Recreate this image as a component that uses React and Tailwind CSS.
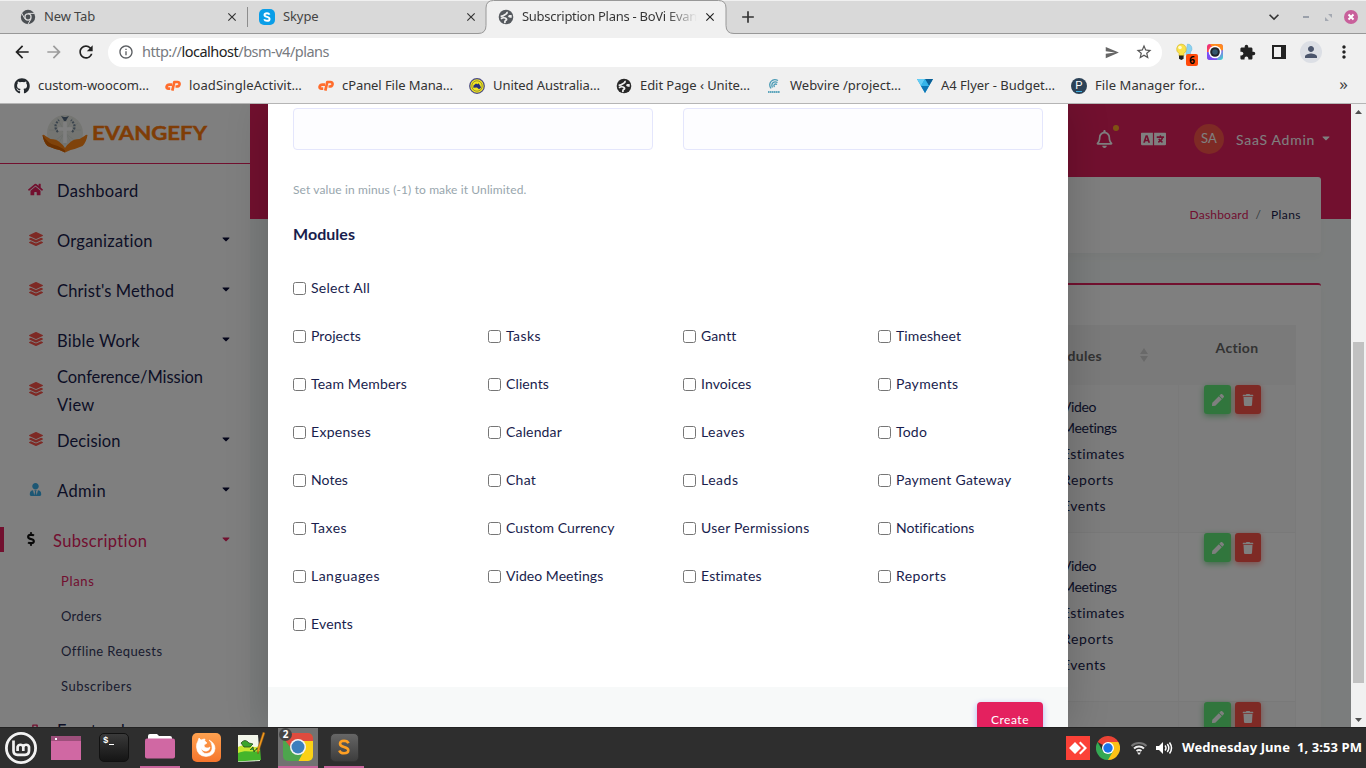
import React, { useLayoutEffect, useRef } from "react";
import { FaHome, FaLayerGroup, FaUserTie, FaDollarSign, FaLanguage, FaRegBell, FaPen, FaTrash, FaGithub, FaCaretDown, FaNetworkWired } from "react-icons/fa";
import { MdArrowBack, MdArrowForward, MdRefresh, MdInfoOutline, MdSend, MdStarBorder, MdExtension, MdPerson, MdMoreVert, MdExpandMore, MdClose, MdAdd } from "react-icons/md";

// Text set to an exact advance width by spreading the remainder over its letters.
function Fit({ w, className = "", children }) {
  const ref = useRef(null);
  useLayoutEffect(() => {
    const el = ref.current;
    el.style.letterSpacing = "0px";
    const natural = el.getBoundingClientRect().width;
    el.style.letterSpacing = (w - natural) / el.textContent.length + "px";
  }, [w]);
  return <span ref={ref} className={"inline-block shrink-0 whitespace-nowrap " + className}>{children}</span>;
}

function Globe({ className }) {
  return (
    <svg viewBox="0 0 16 16" className={className}>
      <circle cx="8" cy="8" r="7.3" fill="currentColor" />
      <path d="M8.800 2.800C9.800 4.600 8 4.900 7 5.600 6 6.600 5 7.300 2.600 7.300" fill="none" stroke="#efefef" strokeWidth="1.700" />
      <path d="M3 9.800c1.500-1.300 4-1.300 5.200-.2 1.300 1.200-.8 1.600-1.200 2.600-.3.900-.1 1.300 0 2" fill="none" stroke="#efefef" strokeWidth="1.700" />
      <path d="M13.900 6.400c-1.600-.9-3.700-.3-3.800.9 0 1.300 2.100 1.500 3.400 1.700z" fill="#efefef" />
    </svg>
  );
}

function ChromeLogo({ className }) {
  return (
    <svg viewBox="0 0 24 24" className={className}>
      <path d="M12 12 1.6 6A12 12 0 0 1 22.4 6z" fill="#ea4335" />
      <path d="M12 12V6h10.4A12 12 0 0 1 12 24z" fill="#fbc116" />
      <path d="M12 12l5.2 3L12 24A12 12 0 0 1 1.6 6l5.2 9z" fill="#34a853" />
      <circle cx="12" cy="12" r="6" fill="#fff" />
      <circle cx="12" cy="12" r="4.7" fill="#1a73e8" />
    </svg>
  );
}

function TabStrip() {
  return (
    <div className="flex h-[34px] shrink-0 items-stretch border-b border-[#989898] border-t border-t-[#f0f0f0] bg-[#d9d9d9] text-[13px] text-[#444]">
      <div className="flex w-[247px] items-center pl-5">
        <svg viewBox="0 0 16 16" className="size-4 shrink-0">
          <circle cx="8" cy="8" r="7.2" fill="#4b4f53" />
          <circle cx="8" cy="8" r="3.7" fill="#d9d9d9" />
          <circle cx="8" cy="8" r="2.4" fill="#4b4f53" />
          <path d="M8 4.4h6.6M4.9 9.8 1.6 4M11 9.9 7.8 15.5" stroke="#d9d9d9" strokeWidth="1" />
        </svg>
        <Fit w={51} className="ml-2">New Tab</Fit>
        <MdClose className="ml-[130px] size-[14px] stroke-[#333] text-[#333]" />
      </div>
      <div className="my-1.5 w-px bg-[#8d8d8d]" />
      <div className="flex w-[238px] items-center pl-[11px]">
        <span className="flex size-4 items-center justify-center rounded-[5px] bg-[#0a9ee8]">
          <svg viewBox="0 0 16 16" className="size-4"><path d="M10.600 5.600C10 4.500 9.200 4.200 8 4.200c-1.400 0-2.500.7-2.500 1.800 0 2.500 5.100 1.300 5.100 3.900 0 1.200-1.200 1.900-2.600 1.900s-2.400-.5-2.800-1.600" fill="none" stroke="#fff" strokeWidth="1.900" /></svg>
        </span>
        <Fit w={35.5} className="ml-2">Skype</Fit>
        <MdClose className="ml-[145px] size-[14px] stroke-[#333] text-[#333]" />
      </div>
      <div className="relative flex w-[240px] items-center pl-3">
        <svg viewBox="0 0 256 34" className="absolute -left-2 -top-px h-[34px] w-[256px]">
          <path d="M0 33.500q8 0 8-8V8q0-7.500 7.500-7.500h225Q248 .5 248 8v17.500q0 8 8 8V35H0z" fill="#f0f0f0" />
          <path d="M0 33.500q8 0 8-8V8q0-7.500 7.500-7.500h225Q248 .5 248 8v17.500q0 8 8 8" fill="none" stroke="#989898" />
        </svg>
        <Globe className="relative size-4 shrink-0 text-[#55595e]" />
        <Fit w={175} className="relative ml-2 bg-linear-to-r from-[#333] from-82% to-[#f0f0f0] to-100% bg-clip-text text-transparent">Subscription Plans - BoVi Evan</Fit>
        <MdClose className="relative ml-1.5 size-[14px] shrink-0 stroke-[#222] text-[#222]" />
      </div>
      <div className="flex flex-1 items-center pl-3">
        <MdAdd className="size-[20px] text-[#333]" />
        <MdExpandMore className="ml-[506px] size-[20px] text-[#333]" />
        <div className="ml-[19px] h-[2px] w-[6px] bg-[#9aa0aa]" />
        <svg viewBox="0 0 8 8" className="ml-[16px] size-[7px]"><path d="M3.500 0H8v4.500zM0 3.500V8h4.500z" fill="#a4a9b2" /></svg>
        <svg viewBox="0 0 14 14" className="ml-[12px] size-[14px]"><circle cx="7" cy="7" r="7" fill="#c8609b" /><path d="M4.500 4.500l5 5M9.500 4.500l-5 5" stroke="#fff" strokeWidth="2" /></svg>
      </div>
    </div>
  );
}

function Toolbar() {
  return (
    <div className="flex h-[36px] shrink-0 items-center bg-[#f0f0f0] pl-3 text-[#333]">
      <MdArrowBack className="size-5 text-[#222]" />
      <MdArrowForward className="ml-3 size-5 text-[#9c9c9c]" />
      <MdRefresh className="ml-3 size-5 text-[#222]" />
      <div className="ml-3 flex h-[29px] w-[1054px] items-center rounded-full bg-white pl-2.5 text-[14.5px]">
        <MdInfoOutline className="size-4 text-[#5a5d61]" />
        <Fit w={187} className="ml-2 text-[#777b80]">http://<span className="text-[#222]">localhost</span>/bsm-v4/plans</Fit>
        <MdSend className="ml-auto h-[15px] w-4 text-[#666]" />
        <MdStarBorder className="ml-[15px] mr-[9px] size-[18px] text-[#555]" />
      </div>
      <div className="relative ml-[13px] size-[22px]">
        <svg viewBox="0 0 22 22" className="size-[22px]">
          <path d="M12.500 3a4.600 4.600 0 0 1 3 8V14H11v-3z" fill="#8bd3f2" stroke="#6fb4d6" strokeWidth=".5" />
          <path d="M6 3a5.200 5.200 0 0 1 3 9.500V15H4v-2.500A5.200 5.200 0 0 1 6 3z" fill="#fbe24a" stroke="#c9a820" strokeWidth=".5" />
          <circle cx="5" cy="6.500" r="1.800" fill="#fffbd0" />
          <path d="M4 14.500h4.600v3.200l-2.300 1.300L4 17.700z" fill="#222" />
        </svg>
        <span className="absolute left-[11px] top-[13px] flex h-3 w-3 items-center justify-center rounded-xs bg-[#ff4a0a] text-[10px] font-bold text-black">6</span>
      </div>
      <svg viewBox="0 0 16 16" className="ml-[10px] size-4">
        <defs>
          <linearGradient id="lens" x1="0" y1="0" x2="1" y2="1"><stop offset="0" stopColor="#e91e8c" /><stop offset=".35" stopColor="#ff5a3c" /><stop offset=".6" stopColor="#a05cf0" /><stop offset="1" stopColor="#2fe0c8" /></linearGradient>
        </defs>
        <rect width="16" height="16" rx="3" fill="url(#lens)" />
        <path d="M3 0h10q3 0 3 3v3L8 8z" fill="#ff8a1e" />
        <path d="M0 8l8 0 2 8H3q-3 0-3-3z" fill="#7a4cf5" />
        <circle cx="8" cy="8" r="6.300" fill="#fff" /><circle cx="8" cy="8" r="4.800" fill="#20252b" /><circle cx="8" cy="8" r="2.800" fill="#35586e" />
      </svg>
      <MdExtension className="ml-4 size-[17px] text-[#222]" />
      <div className="ml-4 h-[14px] w-[14px] border-2 border-r-[5px] border-[#222]" />
      <div className="ml-[14px] flex size-[22px] items-center justify-center rounded-full bg-[#dcdfe5]"><MdPerson className="size-[18px] text-[#4b556c]" /></div>
      <MdMoreVert className="ml-3 size-5 text-[#222]" />
    </div>
  );
}

function CpanelMark() {
  return (
    <svg viewBox="0 0 16 16" className="size-4" fill="none" stroke="#ff6c2c" strokeWidth="2.700" strokeLinejoin="round">
      <path d="M7 6.600H4.500q-2.300.1-2.900 2-.3 2 1.900 2.100h1.700" />
      <path d="M7.300 12.600 9.300 4h3q2.500.2 2.200 2.300-.6 2.200-3 2.200h-1" />
    </svg>
  );
}

const bookmarks = [
  ["custom-woocom…", 111, <FaGithub className="size-4 text-[#24292e]" />],
  ["loadSingleActivit…", 113, <CpanelMark />],
  ["cPanel File Mana…", 111, <CpanelMark />],
  ["United Australia…", 107, <svg viewBox="0 0 16 16" className="size-4"><circle cx="8" cy="8" r="7.300" fill="#f2e622" stroke="#4a4a86" strokeWidth="1.200" /><circle cx="8" cy="8" r="5.200" fill="none" stroke="#77752a" strokeWidth=".7" /><path d="M4.300 9.800 4.500 7.500 7 5.500l1.500.7 1-1 1.800 2.500.7 2-2 1.500-2-1.600z" fill="#28317c" /></svg>],
  ["Edit Page ‹ Unite…", 110, <Globe className="size-4 text-[#292929]" />],
  ["Webvire /project…", 111, <svg viewBox="0 0 16 16" className="size-4"><path d="M5 10.500C1.500 5 6.500-.5 12 2.500M6.500 9.500C4.500 5.500 8 2.500 11.500 4.500M8.500 9c-1.500-2 .5-3.800 2.500-2.500" fill="none" stroke="#4a9ab5" strokeWidth="1.300" /><path d="M2 14h12" stroke="#5fa6bd" strokeWidth="2" strokeDasharray="1.600 .4" /></svg>],
  ["A4 Flyer - Budget…", 114, <svg viewBox="0 0 16 16" className="size-4"><path d="M0 1h16L8 15z" fill="#1a9ad4" /><path d="M0 1h8L4 8z" fill="#64cdf5" /><path d="M8 1h8l-4 7z" fill="#0b5e94" /><path d="M4 8h8l-4 7z" fill="#0d76b5" /><path d="M8 1l4 7H4z" fill="#35b4e9" /></svg>],
  ["File Manager for…", 110, <span className="flex size-4 flex-col items-center rounded-full bg-[#2c4257] pt-[2px] font-['Liberation_Sans'] text-[11px] leading-[11px] text-white">P<span className="h-px w-[6px] bg-[#3fb0e0]" /></span>],
];

function Bookmarks() {
  return (
    <div className="flex h-[34px] shrink-0 items-center gap-4 border-b border-[#b5b5b5] bg-[#f0f0f0] pb-0.5 pl-3.5 text-[13px] text-[#333]">
      {bookmarks.map(([label, w, icon]) => (
        <div key={label} className="flex items-center gap-2"><span className="shrink-0">{icon}</span><Fit w={w}>{label}</Fit></div>
      ))}
      <span className="mb-1 ml-auto mr-[18px] text-[17px] leading-none text-[#444]">»</span>
    </div>
  );
}

const layers = <FaLayerGroup className="size-[14px] text-[#fc544b]" />;
const menu = [
  ["Dashboard", 81.5, <FaHome className="size-[15px] text-[#e4215f]" />, false],
  ["Organization", 96, layers, true],
  ["Christ's Method", 117, layers, true],
  ["Bible Work", 83, layers, true],
  ["Conference/Mission", 146, layers, false, "View"],
  ["Decision", 63.5, layers, true],
  ["Admin", 49, <FaUserTie className="size-[13px] text-[#3aaee8]" />, true],
];

function Sidebar() {
  return (
    <aside className="flex w-[250px] shrink-0 flex-col bg-white text-[16.500px] text-[#191d4d]">
      <div className="flex h-[60px] shrink-0 items-center border-b border-[#e4215f] pl-[41px]">
        <svg viewBox="0 0 48 40" className="h-10 w-12">
          <circle cx="24" cy="19" r="18" fill="#e9ebe4" />
          <path d="M24 3v28M8 16h32M11 9l26 20M37 9 11 29M16 4l16 28M32 4 16 32" stroke="#d5dcd8" strokeWidth=".8" />
          <path d="M17 18c-4-4-3-8 1-12M31 18c4-4 3-8-1-12" fill="none" stroke="#76899c" strokeWidth="2.200" strokeDasharray="2 1.200" />
          <path d="M20 2l3 1h2l3-1-2 3-1 2h-2l-1-2z" fill="#566b82" />
          <path d="M24 8v21M17 15h14" stroke="#fff" strokeWidth="3.600" />
          <path d="M1.500 21q1-1 3 1l5 3q6 0 9 3 4 3 5.500 6 1.500-3 5.500-6 3-3 9-3l5-3q2-2 3-1-1 7-5 11-7 3-12 4l-5.500 2.500L18.500 36q-5-1-12-4-4-4-5-11z" fill="#ff8716" />
          <path d="M1.500 21q6 9 12 10 7 2 10.500 5.500v2L18.500 36q-5-1-12-4-4-4-5-11z" fill="#d96402" />
        </svg>
        <svg viewBox="0 0 118 18" className="ml-[3px] h-[18px] w-[118px]">
          <text x="0" y="15" textLength="115" lengthAdjust="spacingAndGlyphs" fontFamily="Lato, sans-serif" fontWeight="700" fontSize="18" stroke="#ff7a0c" strokeWidth=".4" fill="#ff7a0c">EVANGEFY</text>
        </svg>
      </div>
      <nav className="flex flex-col pt-0.5">
        {menu.map(([label, w, icon, caret, second]) => (
          <div key={label} className="flex h-[50px] items-center pl-7">
            <span className="mb-[4px] flex w-[15px] shrink-0 justify-center">{icon}</span>
            <div className="ml-[14px] flex flex-1 flex-col leading-7">
              <Fit w={w} className="self-start">{label}</Fit>
              {second && <Fit w={37.5} className="self-start">{second}</Fit>}
            </div>
            {caret && <FaCaretDown className="mb-[4px] mr-[18px] size-3 text-[#0a0d38]" />}
          </div>
        ))}
        <div className="flex h-[50px] items-center text-[#e4215f]">
          <span className="mb-1 h-[25px] w-1 bg-[#e4215f]" />
          <FaDollarSign className="mb-[4px] ml-5 size-[14px] text-[#111]" />
          <Fit w={94.5} className="ml-[15px]">Subscription</Fit>
          <FaCaretDown className="mb-[4px] ml-auto mr-[18px] size-3" />
        </div>
        <div className="-mt-0.5 flex flex-col pl-[61px] text-[13px] leading-[34px] text-[#34395e]">
          <span className="h-[35px] text-[#e4215f]"><Fit w={33.5}>Plans</Fit></span>
          <span className="h-[35px]"><Fit w={41}>Orders</Fit></span>
          <span className="h-[35px]"><Fit w={101}>Offline Requests</Fit></span>
          <span className="h-[35px]"><Fit w={71}>Subscribers</Fit></span>
        </div>
        <div className="flex h-[54px] items-center pl-7">
          <FaNetworkWired className="mb-[3px] size-[14px] text-[#e4215f]" />
          <Fit w={68} className="ml-[15px]">Frontend</Fit>
        </div>
      </nav>
    </aside>
  );
}

function ActionButtons() {
  return (
    <div className="flex gap-1 pl-[25px] text-white">
      <span className="flex h-[29px] w-[27px] items-center justify-center rounded-[3px] bg-[#63ed7a] shadow-[0_2px_6px_#81d694]"><FaPen className="size-3" /></span>
      <span className="flex h-[29px] w-[26px] items-center justify-center rounded-[3px] bg-[#fc544b] shadow-[0_2px_6px_#fd9b96]"><FaTrash className="size-3" /></span>
    </div>
  );
}

function PlanRow({ className }) {
  return (
    <div className={"flex shrink-0 border-b border-[#f2f2f2] text-[14px] text-[#191d4d] " + className}>
      <div className="flex w-[133px] flex-col justify-end border-r border-[#f4f4f4] pl-[16px]">
        <span className="h-[21px] leading-[21px]"><Fit w={34}>Video</Fit></span>
        <span className="h-[26px] leading-[21px]"><Fit w={55}>Meetings</Fit></span>
        <span className="h-[26px] leading-[21px]"><Fit w={63}>Estimates</Fit></span>
        <span className="h-[26px] leading-[21px]"><Fit w={52}>Reports</Fit></span>
        <span className="h-[26px] leading-[21px]"><Fit w={44}>Events</Fit></span>
      </div>
      <ActionButtons />
    </div>
  );
}

function Content() {
  return (
    <div className="flex flex-1 flex-col bg-[#f7fbfa]">
      <div className="flex h-[115px] shrink-0 flex-col bg-[#e4215f]">
        <div className="flex h-[70px] shrink-0 items-center justify-end pr-[19px] text-white">
          <span className="relative">
            <FaRegBell className="h-[18px] w-[17px]" />
            <span className="absolute -top-[5px] left-[17px] h-[6px] w-[6px] rounded-full bg-[#ffa426]" />
          </span>
          <FaLanguage className="ml-[28px] h-[24px] w-[25px]" />
          <span className="ml-[28px] flex size-[30px] items-center justify-center rounded-full bg-[#fc544b] text-[13px]"><Fit w={16}>SA</Fit></span>
          <Fit w={79} className="ml-3 text-[14px]">SaaS Admin</Fit>
          <FaCaretDown className="mb-[2px] ml-[5px] size-3" />
        </div>
      </div>
      <div className="-mt-[42px] ml-[30px] mr-[30px] flex h-[76px] shrink-0 items-center justify-end rounded-[3px] bg-white pr-5 text-[12px] text-[#191d4d] shadow-[0_4px_8px_rgba(0,0,0,0.03)]">
        <Fit w={59} className="text-[#e4215f]">Dashboard</Fit>
        <span className="ml-[7px] text-[#6c757d]">/</span>
        <Fit w={30} className="ml-[10px]">Plans</Fit>
      </div>
      <div className="mx-[30px] mt-[30px] flex h-[600px] flex-col items-end rounded-[3px] border-t-2 border-[#e4215f] bg-white pr-[25px] pt-10 shadow-[0_4px_8px_rgba(0,0,0,0.03)]">
        <div className="flex w-[250px] flex-col border-r border-[#f4f4f4]">
          <div className="flex h-[60px] shrink-0 bg-[#f5f5f5] text-[14px] font-bold text-[#666]">
            <div className="flex w-[133px] items-center">
              <Fit w={56}>Modules</Fit>
              <svg viewBox="0 0 8 14" className="ml-[38px] h-[14px] w-2"><path d="M0 6 4 0l4 6zM0 8h8l-4 6z" fill="#d2d2d2" /></svg>
            </div>
            <div className="flex flex-1 justify-center pt-3"><Fit w={43}>Action</Fit></div>
          </div>
          <PlanRow className="h-[148px] bg-[#fafafa] [&>div:first-child]:pb-[11px]" />
          <PlanRow className="h-[169px] bg-white [&>div:first-child]:pb-[21px]" />
          <PlanRow className="h-[169px] bg-[#fafafa] [&>div:first-child]:pb-[21px]" />
        </div>
      </div>
    </div>
  );
}

const modules = [
  ["Projects", 50], ["Tasks", 35], ["Gantt", 35], ["Timesheet", 65],
  ["Team Members", 96], ["Clients", 43], ["Invoices", 50.5], ["Payments", 62.5],
  ["Expenses", 60], ["Calendar", 56], ["Leaves", 44], ["Todo", 31],
  ["Notes", 37], ["Chat", 30], ["Leads", 37.5], ["Payment Gateway", 115.5],
  ["Taxes", 36], ["Custom Currency", 108.5], ["User Permissions", 108.5], ["Notifications", 78.5],
  ["Languages", 69], ["Video Meetings", 97.5], ["Estimates", 61], ["Reports", 50.5],
  ["Events", 42],
];

function Check({ label, w }) {
  return (
    <label className="flex h-12 w-[195px] items-center">
      <input type="checkbox" className="size-[13px]" />
      <Fit w={w} className="mb-0.5 ml-[5px]">{label}</Fit>
    </label>
  );
}

function PlanModal() {
  return (
    <div className="flex h-full w-[800px] flex-col bg-white text-[14px] text-[#191d4d] shadow-[0_0_40px_rgba(0,0,0,0.2)]">
      <div className="flex h-[583px] shrink-0 flex-col pl-[25px] pt-1">
        <div className="flex gap-[30px]">
          <div className="h-[42px] w-[360px] rounded-[4px] border border-[#e4e6fc] bg-[#fdfdff]" />
          <div className="h-[42px] w-[360px] rounded-[4px] border border-[#e4e6fc] bg-[#fdfdff]" />
        </div>
        <div className="mt-[30px] h-5 text-[12px] leading-5 text-[#98a6ad]"><Fit w={233.5}>Set value in minus (-1) to make it Unlimited.</Fit></div>
        <div className="mt-[22px] h-6 text-[16px] font-bold leading-6"><Fit w={62}>Modules</Fit></div>
        <div className="mt-[18px]"><Check label="Select All" w={59} /></div>
        <div className="grid w-[780px] grid-cols-4">
          {modules.map(([label, w]) => <Check key={label} label={label} w={w} />)}
        </div>
      </div>
      <div className="flex flex-1 justify-end bg-[#f7f9f9] pr-[25px] pt-[15px]">
        <div className="flex h-[36px] w-[66px] items-center justify-center rounded-[4px] bg-[#e4215f] text-[12px] text-white shadow-[0_2px_6px_#acb5f6]"><Fit w={38}>Create</Fit></div>
      </div>
    </div>
  );
}

function Scrollbar() {
  return (
    <div className="flex w-[15px] shrink-0 flex-col items-center bg-[#f1f1f1]">
      <svg viewBox="0 0 15 15" className="size-[15px] shrink-0"><path d="M4 10h7L7.500 6z" fill="#505050" /></svg>
      <div className="mt-[223px] h-[341px] w-[11px] bg-[#c1c1c1]" />
      <svg viewBox="0 0 15 15" className="mt-auto size-[15px] shrink-0"><path d="M4 6h7l-3.500 4z" fill="#505050" /></svg>
    </div>
  );
}

function Slot({ active, open, children }) {
  return (
    <div className="flex w-[46px] shrink-0 justify-center">
      <div className={"relative flex h-full w-10 items-center justify-center border-b-2 " + (active ? "bg-[#727272] " : "") + (open ? "border-[#c8649c]" : "border-transparent")}>{children}</div>
    </div>
  );
}

function Taskbar() {
  return (
    <div className="flex h-[41px] shrink-0 border-t border-[#222] bg-[#2e2e2e]">
      <div className="flex w-[43px] items-center pl-[5px]">
        <svg viewBox="0 0 32 32" className="size-8">
          <circle cx="16" cy="16" r="14.600" fill="none" stroke="#f2f2f2" strokeWidth="2.800" />
          <path d="M8.500 8.500v10.300q0 4 4 4h7.500q4 0 4-4v-4a3 3 0 0 0-5.700 0V19M18.300 14.800a3 3 0 0 0-5.700 0V19" fill="none" stroke="#f2f2f2" strokeWidth="2.700" />
        </svg>
      </div>
      <Slot><div className="mt-0.5 flex h-6 w-[30px] flex-col bg-[#d068a3]"><div className="h-[5px] bg-[#9d4f7b] pl-1 pt-0.5"><div className="size-[2px] bg-white" /></div></div></Slot>
      <div className="w-[2px]" />
      <Slot>
        <div className="flex h-[29px] w-[30px] items-start rounded-[5px] border border-[#111] bg-linear-to-b from-[#3a3a3a] to-[#151515] pl-[3px] pt-[2px] font-['Liberation_Mono'] text-[9px] font-bold leading-[10px] text-white">
          $<span className="ml-px mt-[8px] h-px w-[5px] bg-white" />
        </div>
      </Slot>
      <Slot open><svg viewBox="0 0 30 26" className="h-[26px] w-[30px]"><path d="M3 2q0-2 2-2h7l2 2h11q2 0 2 2v4H3z" fill="#fff" /><rect y="4.500" width="30" height="20" rx="2" fill="#d068a3" /></svg></Slot>
      <Slot>
        <div className="flex size-[29px] items-center justify-center rounded-[5px] bg-linear-to-b from-[#ffa24f] to-[#f5752c]">
          <svg viewBox="0 0 22 22" className="size-[22px]">
            <path d="M3 5 4 2l2 2q2-1 4-1-1 2 1 3l1 1-3 2q0 3 3 3 2 0 3-1 0 3-3 4-4 1-6-3 1 6 6 5.500 6-1 5-7.500-.5-4-3-6 6 3 6 8.500Q19.500 20 11 20.500 2 20 1.500 11 1.500 7 3 5z" fill="#fff" stroke="#fff" strokeWidth=".6" />
          </svg>
        </div>
      </Slot>
      <Slot>
        <svg viewBox="0 0 30 30" className="size-[30px]">
          <path d="M1 3h20l2 26-22 1z" fill="#f3f6ea" /><path d="M1 17c8-5 14 2 22-2l1 13-23 1.500z" fill="#45b52b" /><path d="M1 15c8-4 14 2 22-1v5c-8 2-14-2-22 2z" fill="#c8e832" />
          <path d="M4 11q4-5 8 0l4 1-3 3H7zM13 18l3-3 1 5 3-4 2 2" fill="#3ba52c" stroke="#284c20" strokeWidth=".8" />
          <path d="M28 1 22 19l-1 3-1-4L26 0z" fill="#f0981d" stroke="#7a4c15" strokeWidth=".5" />
        </svg>
      </Slot>
      <Slot active open>
        <svg viewBox="0 0 30 30" className="size-[30px]">
          <clipPath id="tile"><rect x="0" y="1" width="30" height="28" rx="5" /></clipPath>
          <g clipPath="url(#tile)"><path d="M0 0h30v30H0z" fill="#4da64d" /><path d="M15 8h15v22H15l6-11z" fill="#fbd116" /><path d="M0 0h30v9H15L8 16 1 7z" fill="#df4b3e" /></g>
          <circle cx="15" cy="15" r="8" fill="#f4f4f4" /><circle cx="15" cy="15" r="6.500" fill="#3c7fbd" />
        </svg>
        <span className="absolute left-[1px] top-0 flex size-[13px] items-center justify-center rounded-full bg-[#444] text-[10px] font-bold text-white">2</span>
      </Slot>
      <Slot open><div className="flex size-[29px] items-center justify-center rounded-[5px] border border-[#333] bg-linear-to-b from-[#666] to-[#3d3d3d]"><svg viewBox="0 0 14 18" className="h-[18px] w-[14px]"><path d="M11.500 5.300Q10.500 2.700 7 2.700q-4 .1-4 3 0 2.200 4 3.200 4.300 1 4.300 3.400 0 3-4.300 3Q3.300 15.300 2.300 12.500" fill="none" stroke="#ff9f22" strokeWidth="2.600" /></svg></div></Slot>
      <div className="ml-auto flex items-center pr-1 text-white">
        <svg viewBox="0 0 24 24" className="size-6"><path d="M0 0h24v24H0z" fill="#fb4137" /><path d="M3 12l6-6 6 6-6 6zM13 7l1.500-1.500L21 12l-6.500 6.500L13 17l5-5z" fill="#fff" /></svg>
        <ChromeLogo className="ml-1.5 size-6" />
        <svg viewBox="0 0 18 14" className="ml-[10px] h-[14px] w-[18px]" fill="none" strokeWidth="2"><path d="M1.500 5a11 11 0 0 1 15 0" stroke="#777" /><path d="M4 7.500a7.500 7.500 0 0 1 10 0" stroke="#eee" /><path d="M6.500 10a4 4 0 0 1 5 0" stroke="#eee" /><path d="M7 11.500h4L9 14z" fill="#eee" /></svg>
        <svg viewBox="0 0 18 14" className="ml-[7px] mr-px h-[14px] w-[18px]" fill="none" stroke="#fff" strokeWidth="1.500"><path d="M1 5h3l4-4v12L4 9H1z" fill="#fff" stroke="none" /><path d="M10 4.500q2 2.500 0 5M12.300 3q3 4 0 8M14.500 1.500q4 5.500 0 11" /></svg>
        <Fit w={180} className="ml-2 whitespace-pre text-[13px] font-bold">{"Wednesday June  1, 3:53 PM"}</Fit>
      </div>
    </div>
  );
}

export default function App() {
  return (
    <div className="flex h-[768px] w-[1366px] flex-col overflow-hidden font-['Noto_Sans',sans-serif]">
      <TabStrip />
      <Toolbar />
      <Bookmarks />
      <div className="flex h-[623px] shrink-0 font-['Lato',sans-serif]">
        <div className="relative flex h-[623px] flex-1 overflow-hidden">
          <Sidebar />
          <Content />
          <div className="absolute inset-0 flex bg-black/50 pl-[268px]"><PlanModal /></div>
        </div>
        <Scrollbar />
      </div>
      <Taskbar />
    </div>
  );
}
